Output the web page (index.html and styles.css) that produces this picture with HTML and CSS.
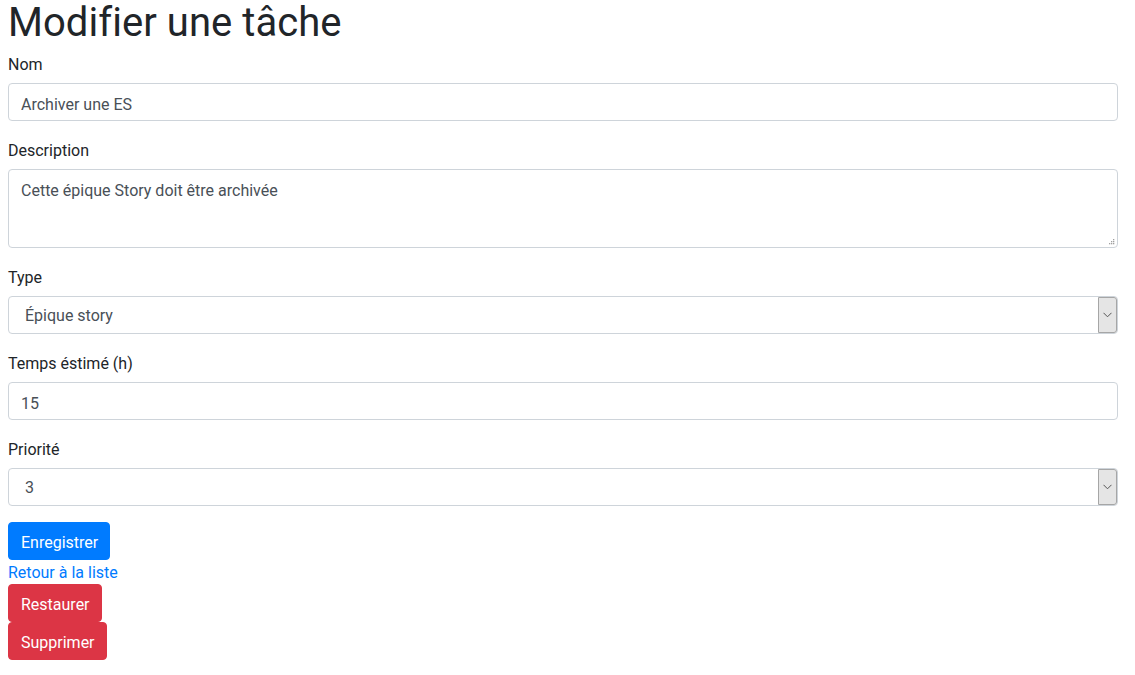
FILE: index.html
```html
<!DOCTYPE html>
<html lang="fr">
<head>
<meta charset="utf-8">
<title>Modifier une tâche</title>
<link rel="stylesheet" href="styles.css">
</head>
<body>
<main class="page">
  <h1 class="title">Modifier une tâche</h1>
  <form class="form">
    <div class="form-group">
      <label class="label" for="nom">Nom</label>
      <input class="control" id="nom" type="text" value="Archiver une ES">
    </div>
    <div class="form-group">
      <label class="label" for="desc">Description</label>
      <textarea class="control area" id="desc">Cette épique Story doit être archivée</textarea>
    </div>
    <div class="form-group">
      <label class="label" for="type">Type</label>
      <div class="select-wrap">
        <select class="control select" id="type">
          <option>Épique story</option>
        </select>
      </div>
    </div>
    <div class="form-group">
      <label class="label" for="temps">Temps éstimé (h)</label>
      <input class="control" id="temps" type="text" value="15">
    </div>
    <div class="form-group">
      <label class="label" for="prio">Priorité</label>
      <div class="select-wrap">
        <select class="control select" id="prio">
          <option>3</option>
        </select>
      </div>
    </div>
    <div class="action-row"><button class="btn btn-primary" type="button">Enregistrer</button></div>
  </form>
  <div class="actions">
    <a class="link" href="#">Retour à la liste</a>
    <div class="action-row"><button class="btn btn-danger" type="button">Restaurer</button></div>
    <div class="action-row"><button class="btn btn-danger" type="button">Supprimer</button></div>
  </div>
</main>
</body>
</html>
```
FILE: styles.css
```css
* { box-sizing: border-box; }
html, body { margin: 0; padding: 0; background: #fff; }
body {
  font-family: Roboto, "Liberation Sans", sans-serif;
  font-size: 16px;
  line-height: 1.5;
  color: #212529;
}
.page { width: 1110px; margin: 0 0 0 8px; padding-top: 2px; }
.title {
  font-size: 40px;
  font-weight: 400;
  line-height: 41px;
  margin: 0 0 8px;
  letter-spacing: 0.05px;
}
.form { margin: 0; }
.form-group { margin-bottom: 16px; }
.label { display: inline-block; padding-top: 2px; margin-bottom: 6px; }
.control {
  display: block;
  width: 100%;
  height: 38px;
  padding: 8px 12px 4px;
  font: inherit;
  line-height: 1.5;
  color: #495057;
  background: #fff;
  border: 1px solid #ced4da;
  border-radius: 4px;
  margin: 0;
}
.area {
  height: 79px;
  resize: none;
  padding-top: 9px;
  background: #fff url("data:image/svg+xml;utf8,<svg xmlns='http://www.w3.org/2000/svg' width='7' height='7' viewBox='0 0 7 7'><g fill='%23a0a0a0'><rect x='5' y='1' width='1.3' height='1.3'/><rect x='3' y='3' width='1.3' height='1.3'/><rect x='5' y='3' width='1.3' height='1.3'/><rect x='1' y='5' width='1.3' height='1.3'/><rect x='3' y='5' width='1.3' height='1.3'/><rect x='5' y='5' width='1.3' height='1.3'/></g></svg>") no-repeat right 2px bottom 2px;
}
.select-wrap { position: relative; }
.select {
  -webkit-appearance: none;
  appearance: none;
  padding-left: 16px;
  padding-top: 7px;
  padding-bottom: 5px;
}
.select-wrap::after {
  content: "";
  position: absolute;
  right: 1px;
  top: 1px;
  bottom: 1px;
  width: 17px;
  background: #e5e5e5 url("data:image/svg+xml;utf8,<svg xmlns='http://www.w3.org/2000/svg' width='9' height='6' viewBox='0 0 9 6'><path d='M0.5 0.8 L4.5 4.8 L8.5 0.8' fill='none' stroke='%23555' stroke-width='1'/></svg>") no-repeat center;
  border: 1px solid #a6a6a6;
  border-radius: 0 3px 3px 0;
  pointer-events: none;
}
.btn {
  display: block;
  font: inherit;
  line-height: 1.5;
  padding: 8px 11px 4px 12px;
  border: 1px solid transparent;
  border-radius: 4px;
  color: #fff;
  cursor: pointer;
  margin: 0;
  height: 38px;
}
.btn-primary { background: #007bff; border-color: #007bff; }
.btn-danger { background: #dc3545; border-color: #dc3545; }
.action-row { height: 38px; }
.link {
  display: block;
  width: fit-content;
  height: 24px;
  padding-top: 2px;
  line-height: 22px;
  color: #007bff;
  text-decoration: none;
}
```
